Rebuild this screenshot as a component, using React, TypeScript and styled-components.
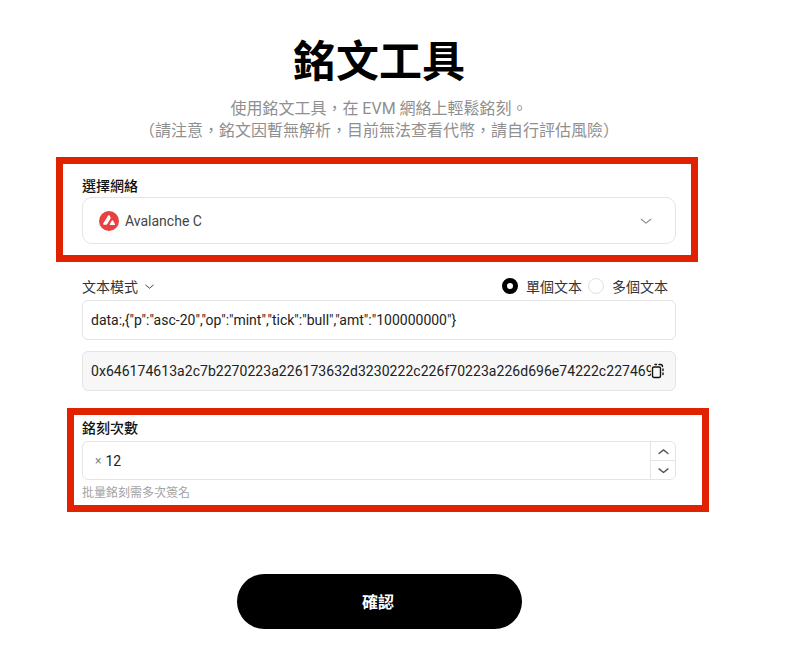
import React from "react";
import styled, { createGlobalStyle } from "styled-components";

const Global = createGlobalStyle`
  html, body { margin: 0; padding: 0; background: #fff; }
  body { font-family: "Roboto", "Noto Sans CJK TC", sans-serif; }
`;

const Page = styled.div`
  position: relative;
  width: 800px;
  height: 663px;
  overflow: hidden;
  padding: 30px 124px 0 82px;
  box-sizing: border-box;
  display: flex;
  flex-direction: column;
  align-items: stretch;
`;

const Title = styled.h1`
  margin: 0;
  text-align: center;
  font-family: "Noto Sans CJK TC", sans-serif;
  font-size: 43px;
  line-height: 56px;
  font-weight: 700;
  color: #000;
`;

const Subtitle = styled.p`
  margin: 12px 0 0;
  text-align: center;
  font-size: 16px;
  line-height: 22px;
  color: #8f8f8f;
  font-weight: 400;
`;

const Label = styled.div`
  font-size: 14px;
  line-height: 20px;
  font-weight: 500;
  color: #111;
`;

const NetworkField = styled.section`
  margin-top: 34px;
`;

const Select = styled.div`
  margin-top: 1px;
  height: 47px;
  box-sizing: border-box;
  border: 1.5px solid #e4e4e4;
  border-radius: 10px;
  display: flex;
  align-items: center;
  padding: 0 22px 0 16px;
  gap: 6px;
  color: #444;
  font-size: 14px;
`;

const SelectText = styled.span`
  flex: 1;
`;

const ModeRow = styled.div`
  margin-top: 30px;
  height: 24px;
  display: flex;
  align-items: center;
  font-size: 14px;
  color: #333;
`;

const ModeName = styled.div`
  display: flex;
  align-items: center;
  gap: 6px;
  flex: 1;
`;

const RadioOption = styled.div`
  display: flex;
  align-items: center;
  gap: 8px;
  margin-left: 8px;
  margin-right: 6px;
  & + & { margin-left: 0; margin-right: 8px; }
`;

const RadioDot = styled.span<{ $on?: boolean }>`
  width: 16px;
  height: 16px;
  border-radius: 50%;
  box-sizing: border-box;
  border: ${(p) => (p.$on ? "5px solid #000" : "1.5px solid #e3e3e3")};
  background: #fff;
`;

const TextBox = styled.div<{ $filled?: boolean }>`
  height: 40px;
  box-sizing: border-box;
  border: 1.5px solid #e4e4e4;
  border-radius: 6px;
  display: flex;
  align-items: center;
  padding: 0 8px;
  font-size: 14px;
  color: #222;
  background: ${(p) => (p.$filled ? "#f7f7f7" : "#fff")};
  white-space: nowrap;
  overflow: hidden;
`;

const DataBox = styled(TextBox)`
  margin-top: 2px;
`;

const HexBox = styled(TextBox)`
  margin-top: 11px;
  padding-right: 10px;
`;

const HexText = styled.span`
  flex: 1;
  overflow: hidden;
  letter-spacing: 0.04px;
`;

const CountField = styled.section`
  margin-top: 27px;
`;

const NumberBox = styled.div`
  margin-top: 3px;
  height: 39px;
  box-sizing: border-box;
  border: 1.5px solid #e4e4e4;
  border-radius: 6px;
  display: flex;
  align-items: stretch;
`;

const NumberValue = styled.div`
  flex: 1;
  display: flex;
  align-items: center;
  padding-left: 12px;
  gap: 4px;
  font-size: 14px;
  color: #222;
`;

const Times = styled.span`
  color: #888;
  font-size: 12px;
`;

const Stepper = styled.div`
  width: 24px;
  display: flex;
  flex-direction: column;
  border-left: 1.5px solid #e4e4e4;
`;

const Step = styled.div`
  flex: 1;
  display: flex;
  align-items: center;
  justify-content: center;
  & + & { border-top: 1.5px solid #e4e4e4; }
`;

const Hint = styled.div`
  margin-top: 5px;
  font-size: 12px;
  line-height: 16px;
  color: #a3a3a3;
`;

const Confirm = styled.button`
  margin: 73px 0 0 155px;
  width: 285px;
  height: 55px;
  border: none;
  border-radius: 28px;
  background: #000;
  color: #fff;
  font-family: "Noto Sans CJK TC", sans-serif;
  font-size: 16px;
  font-weight: 700;
  padding: 0 3px 1px 0;
`;

const Highlight = styled.div<{ $x: number; $y: number; $w: number; $h: number }>`
  position: absolute;
  left: ${(p) => p.$x}px;
  top: ${(p) => p.$y}px;
  width: ${(p) => p.$w}px;
  height: ${(p) => p.$h}px;
  box-sizing: border-box;
  border: 7px solid #e02200;
  pointer-events: none;
`;

const Chevron = ({ size, color, up, weight = 1.4 }: { size: number; color: string; up?: boolean; weight?: number }) => (
  <svg width={size} height={size} viewBox="0 0 16 16" fill="none" stroke={color} strokeWidth={weight} strokeLinecap="round" strokeLinejoin="round">
    <path d={up ? "M2.5 10.5 8 6l5.5 4.5" : "M2.5 6 8 10.5 13.5 6"} />
  </svg>
);

const AvaxLogo = () => (
  <svg width="20" height="20" viewBox="0 0 20 20">
    <circle cx="10" cy="10" r="10" fill="#e84142" />
    <path d="M9.2 4.6c.4-.7 1-.7 1.4 0l.9 1.6c.2.4.2.8 0 1.2l-3.2 5.7c-.2.4-.6.6-1 .6H4.9c-.8 0-1.1-.5-.7-1.2z" fill="#fff" />
    <path d="M12.7 9.8c.4-.7 1-.7 1.4 0l1.8 3.1c.4.700.1 1.2-.7 1.2h-3.600c-.8 0-1.1-.5-.7-1.2z" fill="#fff" />
  </svg>
);

const CopyIcon = () => (
  <svg width="14" height="16" viewBox="0 0 14 16" fill="none" stroke="#111" strokeWidth="1.4" style={{ flexShrink: 0 }}>
    <rect x="1.5" y="4" width="8" height="10.5" rx="1.5" />
    <path d="M4 1.5h1.500M8 1.5h1.500c1 0 2 .8 2 2M12 6v1.500M12 10v1.500" strokeLinecap="round" />
  </svg>
);

export default function App() {
  return (
    <>
      <Global />
      <Page>
        <Title>銘文工具</Title>
        <Subtitle>
          使用銘文工具，在 EVM 網絡上輕鬆銘刻。
          <br />
          （請注意，銘文因暫無解析，目前無法查看代幣，請自行評估風險）
        </Subtitle>

        <NetworkField>
          <Label>選擇網絡</Label>
          <Select>
            <AvaxLogo />
            <SelectText>Avalanche C</SelectText>
            <Chevron size={14} color="#888" weight={1.2} />
          </Select>
        </NetworkField>

        <ModeRow>
          <ModeName>
            文本模式
            <Chevron size={11} color="#444" />
          </ModeName>
          <RadioOption>
            <RadioDot $on />
            單個文本
          </RadioOption>
          <RadioOption>
            <RadioDot />
            多個文本
          </RadioOption>
        </ModeRow>

        <DataBox>{'data:,{"p":"asc-20","op":"mint","tick":"bull","amt":"100000000"}'}</DataBox>
        <HexBox $filled>
          <HexText>0x646174613a2c7b2270223a226173632d3230222c226f70223a226d696e74222c227469636b223a2262756c6c222c22616d74223a22313030303030303030227d</HexText>
          <CopyIcon />
        </HexBox>

        <CountField>
          <Label>銘刻次數</Label>
          <NumberBox>
            <NumberValue>
              <Times>×</Times>12
            </NumberValue>
            <Stepper>
              <Step><Chevron size={13} color="#555" up weight={1.7} /></Step>
              <Step><Chevron size={13} color="#555" weight={1.7} /></Step>
            </Stepper>
          </NumberBox>
          <Hint>批量銘刻需多次簽名</Hint>
        </CountField>

        <Confirm>確認</Confirm>

        <Highlight $x={56} $y={157} $w={642} $h={105} />
        <Highlight $x={67} $y={408} $w={642} $h={104} />
      </Page>
    </>
  );
}
